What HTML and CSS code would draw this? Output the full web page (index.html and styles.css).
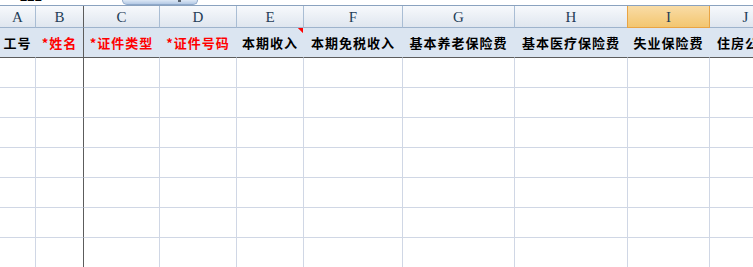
FILE: index.html
```html
<!DOCTYPE html>
<html lang="zh-CN">
<head>
<meta charset="utf-8">
<title>工资表</title>
<link rel="stylesheet" href="styles.css">
</head>
<body>
<div class="topbar">
  <span class="namebox">221</span>
  <div class="fx-toggle"><i></i></div>
</div>

<div class="row colhead">
  <div class="c">A</div>
  <div class="c frz">B</div>
  <div class="c">C</div>
  <div class="c">D</div>
  <div class="c">E</div>
  <div class="c">F</div>
  <div class="c">G</div>
  <div class="c">H</div>
  <div class="c sel">I</div>
  <div class="c">J</div>
</div>

<div class="row titles">
  <div class="c">工号</div>
  <div class="c frz req">*姓名</div>
  <div class="c req">*证件类型</div>
  <div class="c req">*证件号码</div>
  <div class="c note">本期收入</div>
  <div class="c">本期免税收入</div>
  <div class="c">基本养老保险费</div>
  <div class="c">基本医疗保险费</div>
  <div class="c">失业保险费</div>
  <div class="c left">住房公积金</div>
</div>

<div class="row cells"><div class="c"></div><div class="c frz"></div><div class="c"></div><div class="c"></div><div class="c"></div><div class="c"></div><div class="c"></div><div class="c"></div><div class="c"></div><div class="c"></div></div>
<div class="row cells"><div class="c"></div><div class="c frz"></div><div class="c"></div><div class="c"></div><div class="c"></div><div class="c"></div><div class="c"></div><div class="c"></div><div class="c"></div><div class="c"></div></div>
<div class="row cells"><div class="c"></div><div class="c frz"></div><div class="c"></div><div class="c"></div><div class="c"></div><div class="c"></div><div class="c"></div><div class="c"></div><div class="c"></div><div class="c"></div></div>
<div class="row cells"><div class="c"></div><div class="c frz"></div><div class="c"></div><div class="c"></div><div class="c"></div><div class="c"></div><div class="c"></div><div class="c"></div><div class="c"></div><div class="c"></div></div>
<div class="row cells"><div class="c"></div><div class="c frz"></div><div class="c"></div><div class="c"></div><div class="c"></div><div class="c"></div><div class="c"></div><div class="c"></div><div class="c"></div><div class="c"></div></div>
<div class="row cells"><div class="c"></div><div class="c frz"></div><div class="c"></div><div class="c"></div><div class="c"></div><div class="c"></div><div class="c"></div><div class="c"></div><div class="c"></div><div class="c"></div></div>
<div class="row cells"><div class="c"></div><div class="c frz"></div><div class="c"></div><div class="c"></div><div class="c"></div><div class="c"></div><div class="c"></div><div class="c"></div><div class="c"></div><div class="c"></div></div>
</body>
</html>
```

FILE: styles.css
```css
* { box-sizing: border-box; }

html, body {
  margin: 0;
  padding: 0;
  width: 753px;
  height: 267px;
  overflow: hidden;
  background: #ffffff;
}

body {
  font-family: "Noto Sans CJK SC", "Liberation Sans", sans-serif;
}

/* strip of the formula bar left above the grid */
.topbar {
  height: 6px;
  display: flex;
  align-items: flex-end;
  overflow: hidden;
  border-bottom: 1px solid #8aa2bf;
}

.namebox {
  width: 122px;
  flex: none;
  padding-left: 20px;
  height: 14px;
  line-height: 14px;
  font: bold 13px "Liberation Sans", sans-serif;
  color: #000;
  margin-bottom: 2px;
}

.fx-toggle {
  align-self: flex-start;
  width: 76px;
  height: 5px;
  border: 1px solid #8fa9ca;
  border-top: none;
  border-radius: 0 0 9px 9px;
  background: linear-gradient(#dce7f5, #b4c9e5);
  display: flex;
  justify-content: flex-end;
  padding-right: 16px;
}

.fx-toggle i {
  width: 3px;
  height: 2px;
  background: #5a6470;
}

/* grid rows */
.row {
  display: grid;
  grid-template-columns: 36px 48px 76px 77px 67px 99px 112px 113px 82px 72px;
  width: 782px;
}

.c {
  border-right: 1px solid #d0d7e5;
  border-bottom: 1px solid #d0d7e5;
  white-space: nowrap;
  overflow: hidden;
}

.c.frz { border-right-color: #5c5c5c; }

/* column letters */
.colhead .c {
  height: 22px;
  background: linear-gradient(#f7f9fc, #dfe6ef);
  border-right-color: #a9bdd4;
  border-bottom-color: #9eb3cc;
  font: 15px/22px "Liberation Serif", "DejaVu Serif", serif;
  color: #1f3d57;
  text-align: center;
}

.colhead .c.frz { border-right-color: #5c5c5c; }

.colhead .c.sel {
  background: linear-gradient(#f9dca6, #f3c670);
  border-left: 1px solid #e9a444;
  border-right-color: #e9a444;
  border-bottom-color: #e9a444;
  margin-left: -1px;
}

/* title row */
.titles .c {
  height: 30px;
  background: #dbe5f1;
  border-right-color: #dbe5f1;
  border-bottom-color: #5c5c5c;
  font-size: 13px;
  font-weight: bold;
  letter-spacing: 1px;
  line-height: 29px;
  color: #000;
  text-align: center;
}

.titles .c.frz { border-right-color: #5c5c5c; }
.titles .c.req { color: #ff0000; }
.titles .c.left { text-align: left; padding-left: 7px; }

/* comment marker */
.titles .c.note {
  background:
    linear-gradient(225deg, #ff0000 3.5px, transparent 3.6px) no-repeat top right / 6px 6px,
    #dbe5f1;
}

.cells .c { height: 30px; }
```
